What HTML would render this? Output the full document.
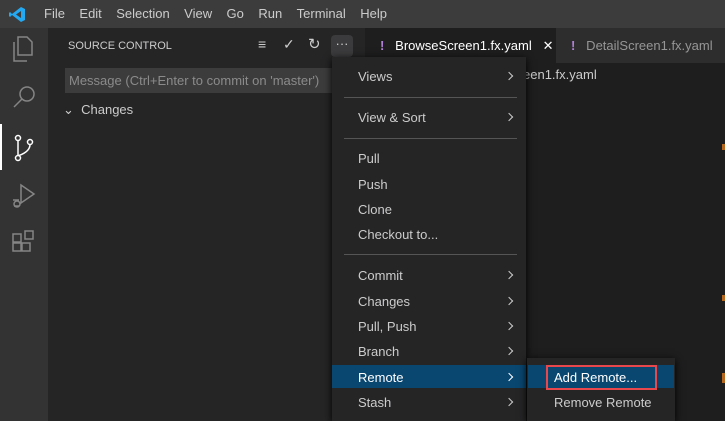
<!DOCTYPE html><html><head><style>
*{margin:0;padding:0;box-sizing:border-box}
body{width:725px;height:421px;overflow:hidden;background:#1e1e1e;font-family:"Liberation Sans",sans-serif;font-size:13px;color:#ccc;position:relative}
.a{position:absolute}
.mi{position:absolute;left:26px;font-size:13px;color:#ccc}
.ch{position:absolute;left:174px;width:6px;height:6px;border-top:1.3px solid #ccc;border-right:1.3px solid #ccc;transform:rotate(45deg)}
.sep{position:absolute;left:12px;width:173px;height:1px;background:#555}
</style></head><body>
<div class="a" style="left:0;top:0;width:725px;height:28px;background:#3c3c3c"></div>
<svg class="a" style="left:9px;top:6px" width="17" height="17" viewBox="0 0 17 17"><path d="M12 1 L16 3 V14 L12 16 L3 9 L1 11 L0 10 V7 L1 6 L3 8 Z M12 5 L7 8.5 L12 12 Z" fill="#23a9f2"/></svg>
<div class="a" style="left:44px;top:6px;color:#ccc;font-size:13px;word-spacing:0">File&nbsp;&nbsp;&nbsp;&nbsp;Edit&nbsp;&nbsp;&nbsp;&nbsp;Selection&nbsp;&nbsp;&nbsp;&nbsp;View&nbsp;&nbsp;&nbsp;&nbsp;Go&nbsp;&nbsp;&nbsp;&nbsp;Run&nbsp;&nbsp;&nbsp;&nbsp;Terminal&nbsp;&nbsp;&nbsp;&nbsp;Help</div>
<div class="a" style="left:0;top:28px;width:48px;height:393px;background:#333"></div>
<div class="a" style="left:0;top:124px;width:2px;height:46px;background:#fff"></div>
<svg class="a" style="left:0;top:28px" width="48" height="240" fill="none" stroke="#858585" stroke-width="1.5">
<path d="M18 9 h9 l5 5 v13 h-14z M14 14 v19 h13"/>
<circle cx="27" cy="66" r="7"/><path d="M22 71 l-8 8"/>
<g stroke="#fff"><circle cx="18" cy="110" r="2.5"/><circle cx="18" cy="130" r="2.5"/><circle cx="30" cy="114" r="2.5"/><path d="M18 112.5 v15 M30 116.5 q0 7 -11 11"/></g>
<path d="M21 157 l13 9 -13 9z M13 172 h6 M14 178 h5"/><circle cx="17" cy="176" r="3"/>
<path d="M13 206 h8 v8 h-8z M13 215 h8 v8 h-8z M22 215 h8 v8 h-8z M25 203 h8 v8 h-8z"/>
</svg>
<div class="a" style="left:48px;top:28px;width:317px;height:393px;background:#252526"></div>
<div class="a" style="left:68px;top:40px;font-size:11px;color:#ccc">SOURCE CONTROL</div>
<div class="a" style="left:258px;top:36px;font-size:14px;color:#ccc">&#8801;</div>
<div class="a" style="left:283px;top:36px;font-size:14px;color:#ccc">&#10003;</div>
<div class="a" style="left:308px;top:35px;font-size:15px;color:#ccc">&#8635;</div>
<div class="a" style="left:331px;top:35px;width:22px;height:22px;background:#3b3b3d;border-radius:4px;text-align:center;color:#ccc;font-size:13px;line-height:18px">···</div>
<div class="a" style="left:65px;top:68px;width:300px;height:25px;background:#3c3c3c;color:#8b8b8b;font-size:13px;padding:5px 4px">Message (Ctrl+Enter to commit on 'master')</div>
<div class="a" style="left:63px;top:102px;font-size:13px;color:#ccc">&#8964;&nbsp; Changes</div>
<div class="a" style="left:365px;top:28px;width:360px;height:35px;background:#252526"></div>
<div class="a" style="left:365px;top:28px;width:191px;height:35px;background:#1e1e1e;color:#fff;padding:10px 0 0 15px;white-space:nowrap"><span style="color:#b180d7;font-weight:bold">!</span>&nbsp;&nbsp; BrowseScreen1.fx.yaml&nbsp;&nbsp; ✕</div>
<div class="a" style="left:556px;top:28px;width:169px;height:35px;background:#2d2d2d;color:#969696;padding:10px 0 0 15px;white-space:nowrap"><span style="color:#b180d7;font-weight:bold">!</span>&nbsp;&nbsp; DetailScreen1.fx.yaml</div>
<div class="a" style="left:523px;top:67px;color:#ccc">een1.fx.yaml</div>
<div class="a" style="left:722px;top:144px;width:3px;height:6px;background:#b5661f"></div>
<div class="a" style="left:722px;top:295px;width:3px;height:6px;background:#b5661f"></div>
<div class="a" style="left:722px;top:373px;width:3px;height:10px;background:#b5661f"></div>
<div class="a" style="left:332px;top:57px;width:194px;height:364px;background:#252526;box-shadow:0 2px 8px #000">
<div class="mi" style="top:12px">Views</div><div class="ch" style="top:16px"></div>
<div class="sep" style="top:40px"></div>
<div class="mi" style="top:53px">View &amp; Sort</div><div class="ch" style="top:57px"></div>
<div class="sep" style="top:81px"></div>
<div class="mi" style="top:94px">Pull</div>
<div class="mi" style="top:120px">Push</div>
<div class="mi" style="top:145px">Clone</div>
<div class="mi" style="top:170px">Checkout to...</div>
<div class="sep" style="top:197px"></div>
<div class="mi" style="top:211px">Commit</div><div class="ch" style="top:215px"></div>
<div class="mi" style="top:237px">Changes</div><div class="ch" style="top:241px"></div>
<div class="mi" style="top:262px">Pull, Push</div><div class="ch" style="top:266px"></div>
<div class="mi" style="top:287px">Branch</div><div class="ch" style="top:291px"></div>
<div class="a" style="left:0;top:308px;width:194px;height:23px;background:#094771"></div>
<div class="mi" style="top:313px;color:#fff">Remote</div><div class="ch" style="top:317px;border-color:#fff"></div>
<div class="mi" style="top:338px">Stash</div><div class="ch" style="top:342px"></div>
</div>
<div class="a" style="left:527px;top:358px;width:148px;height:63px;background:#252526;box-shadow:0 2px 8px #000">
<div class="a" style="left:1px;top:7px;width:146px;height:23px;background:#094771"></div>
<div class="a" style="left:19px;top:7px;width:111px;height:25px;border:2px solid #e8474c"></div>
<div class="a" style="left:27px;top:12px;color:#fff">Add Remote...</div>
<div class="a" style="left:27px;top:37px;color:#ccc">Remove Remote</div>
</div>
</body></html>
